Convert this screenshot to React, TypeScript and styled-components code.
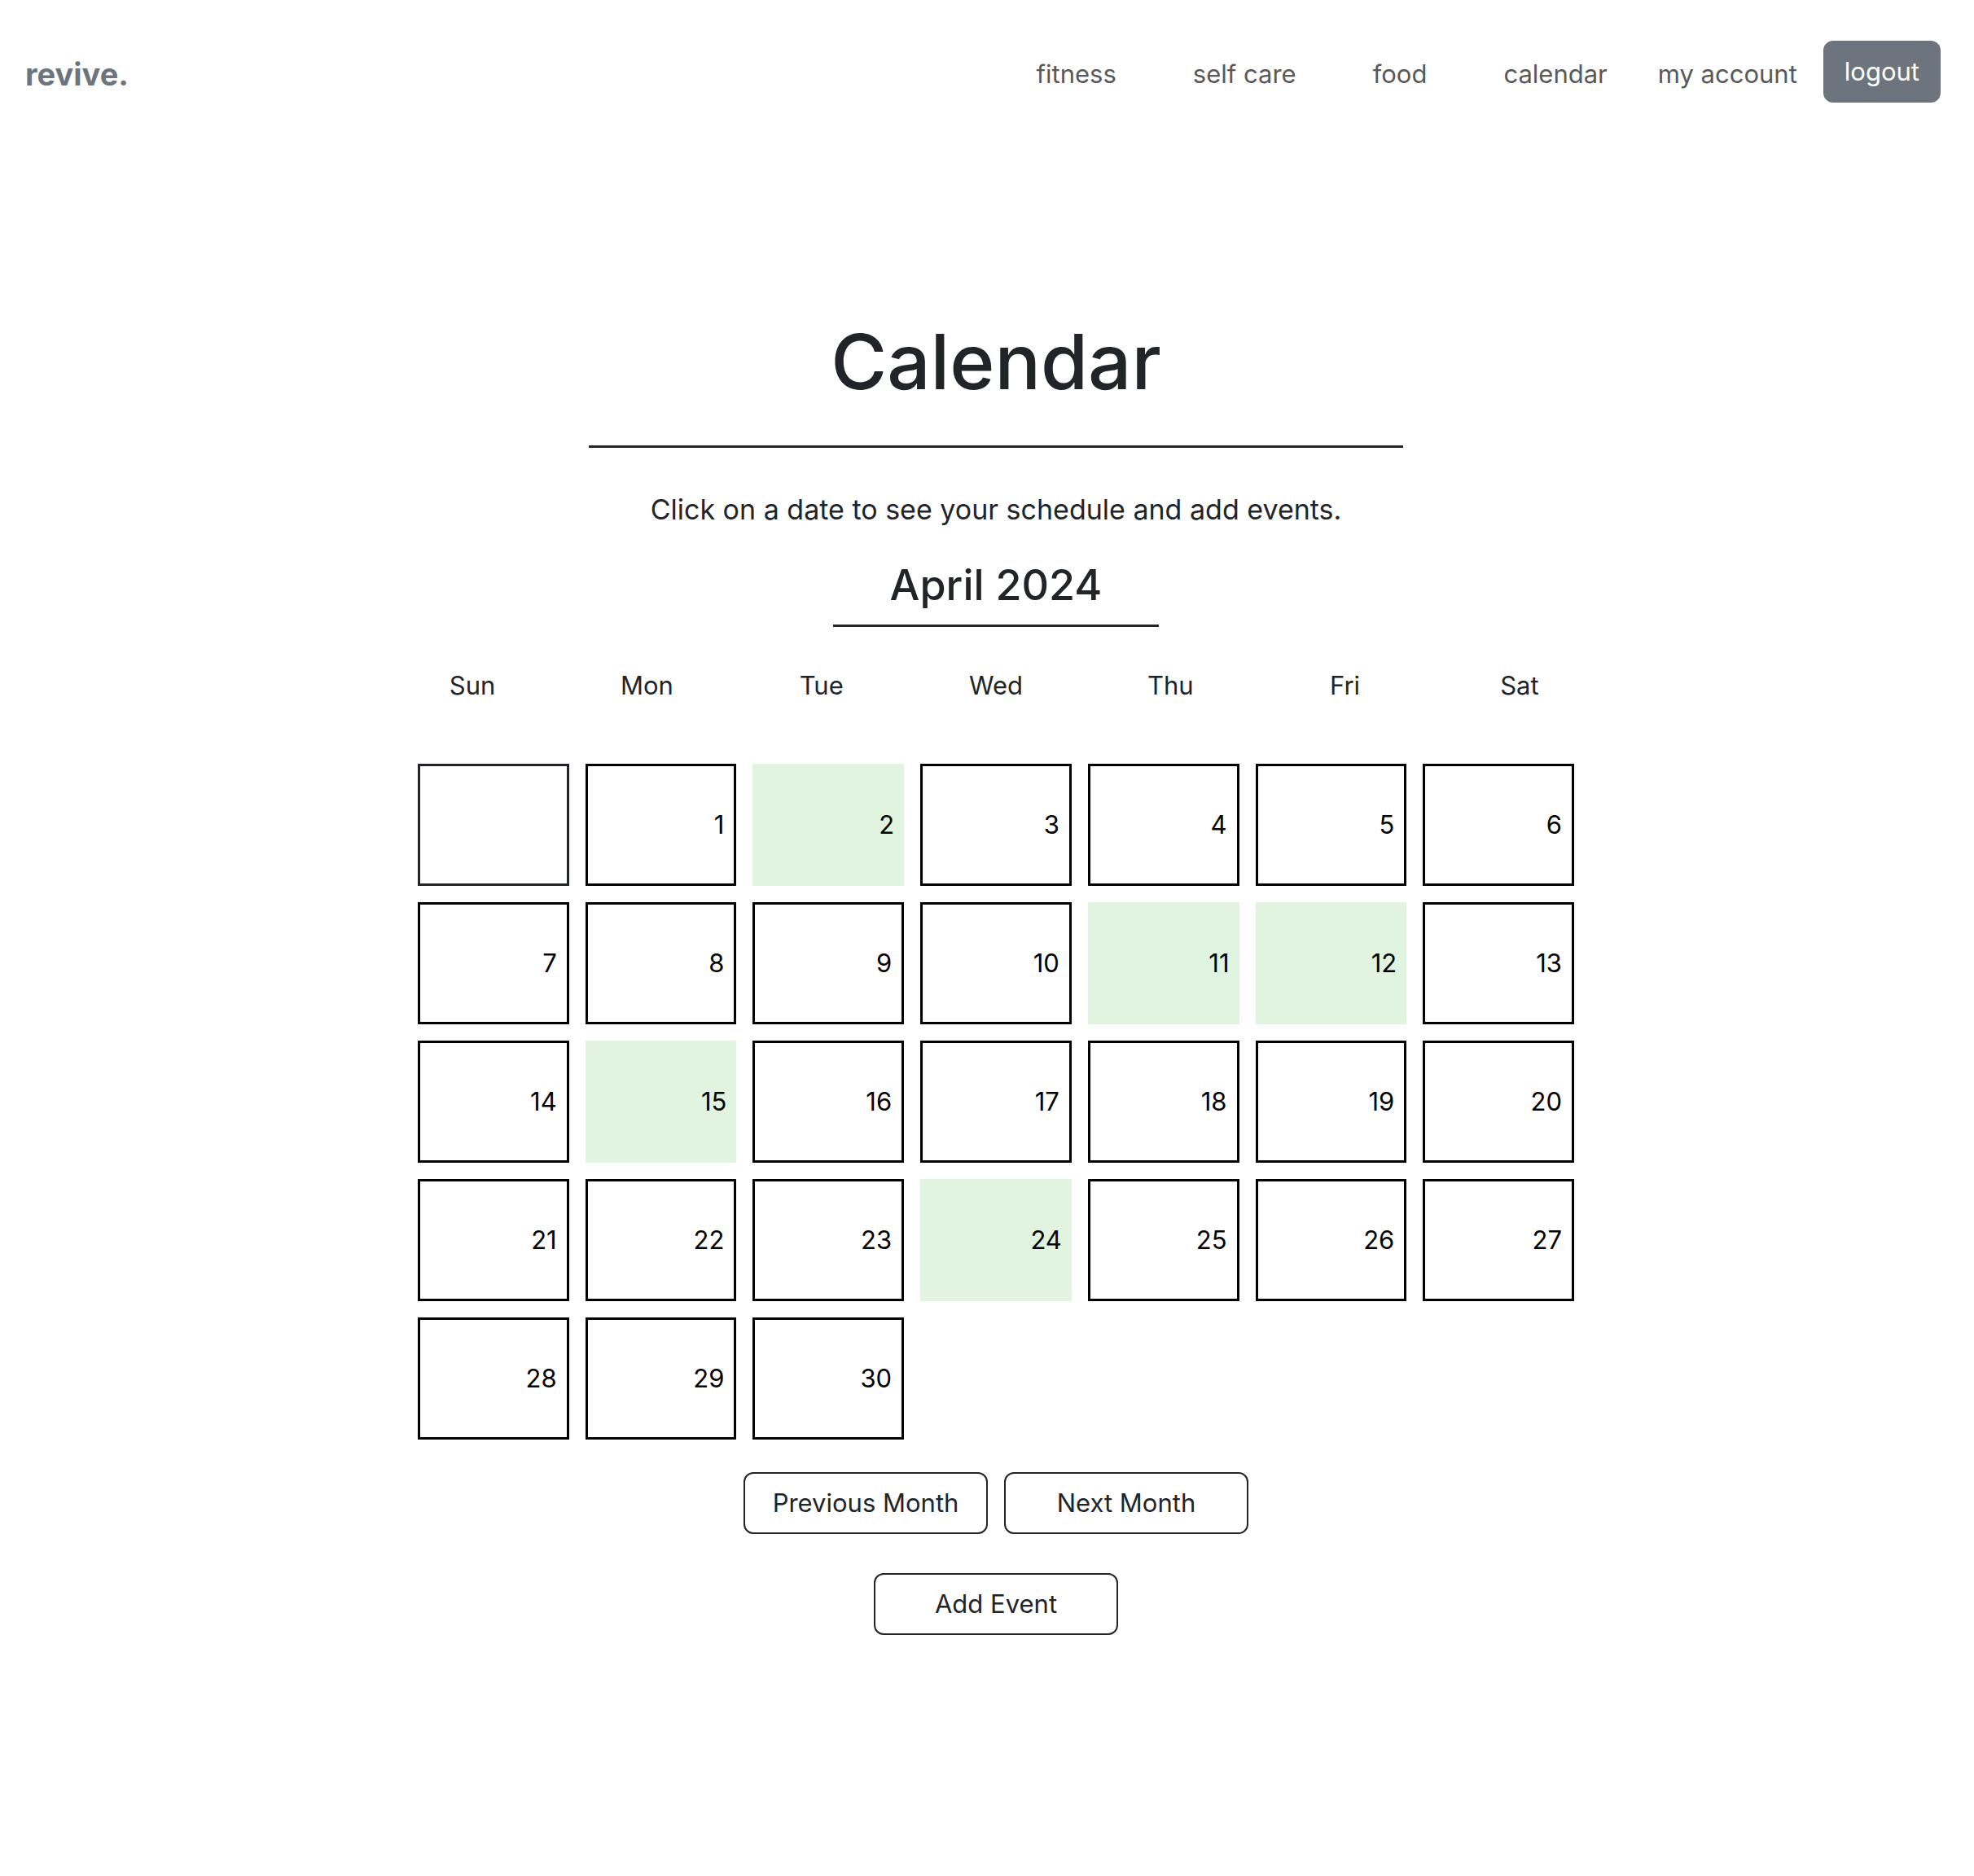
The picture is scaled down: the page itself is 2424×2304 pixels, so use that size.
import React from "react";
import styled, { createGlobalStyle } from "styled-components";

const ink = "#212529";
const slate = "#6c757d";
const booked = "#e1f4df";

const GlobalStyle = createGlobalStyle`
  *, *::before, *::after { box-sizing: border-box; }
  body {
    margin: 0;
    background: #fff;
    color: ${ink};
    font-family: Inter, "Liberation Sans", sans-serif;
    font-size: 31px;
    line-height: 48px;
  }
  h1, h2, p { margin: 0; }
  button { font: inherit; cursor: pointer; }
`;

const Navbar = styled.header`
  display: flex;
  align-items: center;
  justify-content: space-between;
  padding: 50px 41px 0 31px;
`;

const Brand = styled.a`
  padding-top: 6px;
  color: ${slate};
  font-size: 38px;
  font-weight: 700;
  text-decoration: none;
`;

const Nav = styled.nav`
  display: flex;
  align-items: center;
`;

const Links = styled.div`
  display: flex;
  gap: 94px;
`;

const NavLink = styled.a`
  padding-top: 6px;
  color: #595959;
  text-decoration: none;
`;

const AccountLink = styled(NavLink)`
  margin: 0 32px 0 62px;
`;

const LogoutButton = styled.button`
  height: 76px;
  padding: 0 26px;
  border: 0;
  border-radius: 12px;
  background: ${slate};
  color: #fff;
`;

const Main = styled.main`
  display: flex;
  flex-direction: column;
  align-items: center;
  padding: 258px 0 96px 22px;
`;

const Title = styled.h1`
  padding-bottom: 43px;
  font-size: 94px;
  font-weight: 500;
  line-height: 120px;
`;

const Rule = styled.hr<{ $width: number }>`
  width: ${(p) => p.$width}px;
  max-width: 100%;
  height: 3px;
  margin: 0;
  border: 0;
  background: ${ink};
`;

const Intro = styled.p`
  padding: 48px 0 33px;
  font-size: 34px;
  line-height: 56px;
`;

const Month = styled.h2`
  padding-bottom: 16px;
  font-size: 52px;
  font-weight: 500;
  line-height: 64px;
`;

const Calendar = styled.section`
  width: 100%;
  max-width: 1500px;
  padding-top: 48px;
`;

const WeekdayRow = styled.div`
  display: grid;
  grid-template-columns: repeat(7, 1fr);
  text-align: center;
`;

const DayGrid = styled.div`
  display: grid;
  grid-template-columns: repeat(7, 1fr);
  grid-auto-rows: 150px;
  gap: 20px;
  padding: 72px 40px 40px;
`;

const EmptyDay = styled.div`
  border: 3px solid ${ink};
`;

const Day = styled.button<{ $booked: boolean }>`
  padding: 0 12px;
  border: ${(p) => (p.$booked ? "0" : "3px solid #000")};
  border-radius: 0;
  background: ${(p) => (p.$booked ? booked : "transparent")};
  color: #000;
  text-align: right;
`;

const Actions = styled.div`
  display: flex;
  flex-wrap: wrap;
  justify-content: center;
  gap: 20px;
  margin-bottom: 48px;
`;

const ActionButton = styled.button`
  width: 300px;
  height: 76px;
  padding: 0;
  border: 2px solid ${ink};
  border-radius: 12px;
  background: transparent;
  color: ${ink};
`;

const links = ["fitness", "self care", "food", "calendar"];
const weekdays = ["Sun", "Mon", "Tue", "Wed", "Thu", "Fri", "Sat"];
const days = Array.from({ length: 30 }, (_, i) => i + 1);
const bookedDays = [2, 11, 12, 15, 24];

export default function App() {
  return (
    <>
      <GlobalStyle />
      <Navbar>
        <Brand href="#">revive.</Brand>
        <Nav>
          <Links>
            {links.map((link) => (
              <NavLink key={link} href="#">
                {link}
              </NavLink>
            ))}
          </Links>
          <AccountLink href="#">my account</AccountLink>
          <LogoutButton type="button">logout</LogoutButton>
        </Nav>
      </Navbar>
      <Main>
        <Title>Calendar</Title>
        <Rule $width={1000} />
        <Intro>Click on a date to see your schedule and add events.</Intro>
        <Month>April 2024</Month>
        <Rule $width={400} />
        <Calendar>
          <WeekdayRow>
            {weekdays.map((name) => (
              <span key={name}>{name}</span>
            ))}
          </WeekdayRow>
          <DayGrid>
            <EmptyDay />
            {days.map((day) => (
              <Day key={day} type="button" $booked={bookedDays.includes(day)}>
                {day}
              </Day>
            ))}
          </DayGrid>
        </Calendar>
        <Actions>
          <ActionButton type="button">Previous Month</ActionButton>
          <ActionButton type="button">Next Month</ActionButton>
        </Actions>
        <ActionButton type="button">Add Event</ActionButton>
      </Main>
    </>
  );
}
